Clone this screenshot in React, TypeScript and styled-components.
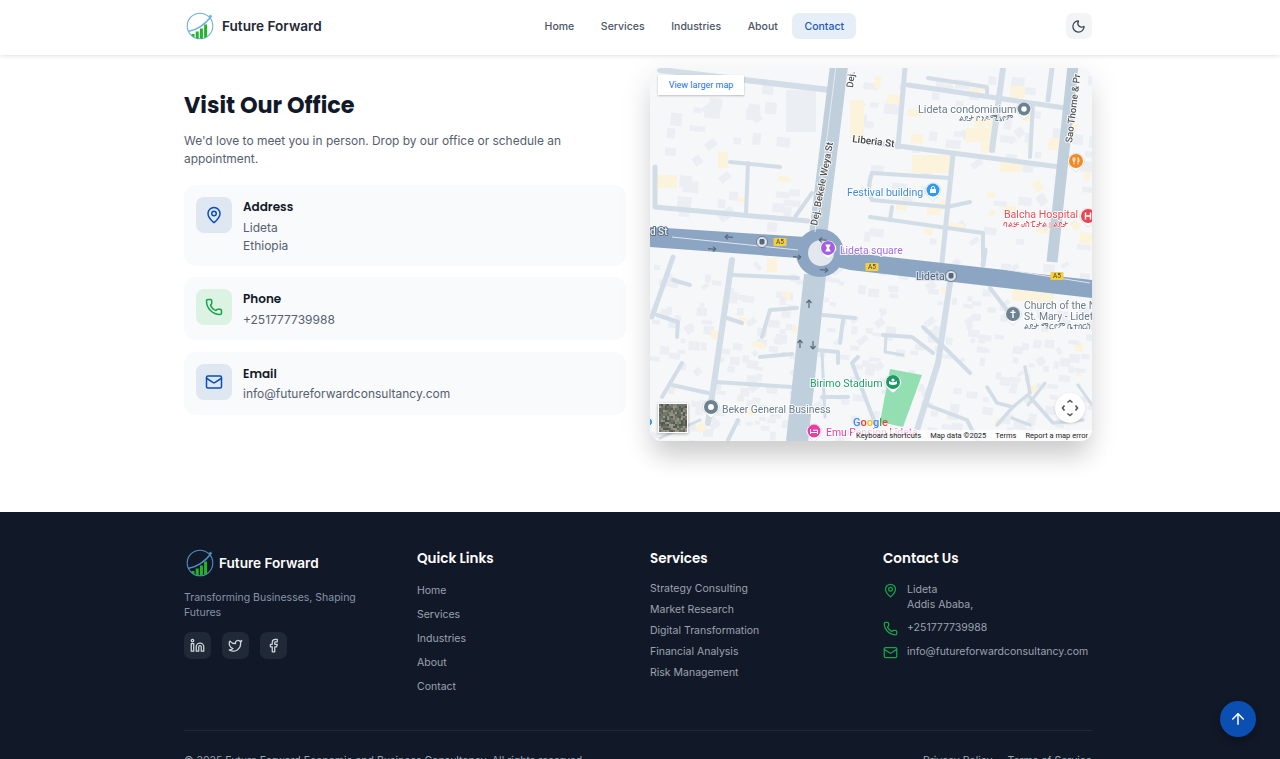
import React from "react";
import styled, { createGlobalStyle } from "styled-components";
import { ArrowUp, Facebook, Linkedin, Mail, MapPin, Moon, Phone, Twitter } from "lucide-react";

const Global = createGlobalStyle`
  html { scrollbar-width: none; }
  html::-webkit-scrollbar { display: none; }
  body { margin: 0; background: #fff; font-family: Inter, "Liberation Sans", sans-serif; color: #111827; }
  * { box-sizing: border-box; }
`;

const HEADING = `Poppins, Inter, "Liberation Sans", sans-serif`;

const Nav = styled.header`
  position: sticky; top: 0; z-index: 20; height: 55px; background: #fff;
  box-shadow: 0 1px 4px rgba(0, 0, 0, .12);
`;
const Container = styled.div`
  width: 908px; margin: 0 188px 0 184px;
`;
const NavInner = styled(Container)`
  height: 52px; display: flex; align-items: center; justify-content: space-between;
`;
const Brand = styled.div<{ $dark?: boolean }>`
  display: flex; align-items: center; gap: ${p => (p.$dark ? 5 : 8)}px; padding-left: 2px;
  color: ${p => (p.$dark ? "#fff" : "#1f2937")};
  font-weight: 600; font-size: 13.6px; line-height: 20px;
`;
const NavLinks = styled.nav`
  display: flex; gap: 2.6px; margin-left: 1px;
`;
const NavLink = styled.a<{ $active?: boolean }>`
  height: 26px; padding: 0 12px; display: flex; align-items: center; border-radius: 7px;
  font-size: 10.5px; font-weight: 500;
  color: ${p => (p.$active ? "#1d5bb5" : "#4b5563")};
  background: ${p => (p.$active ? "#e6eef8" : "transparent")};
`;
const ThemeButton = styled.button`
  width: 26px; height: 26px; border: 0; padding: 0; border-radius: 7px; background: #f3f4f6; color: #374151;
  display: flex; align-items: center; justify-content: center;
`;

const Main = styled.main`
  padding: 13px 0 71px;
`;
const TwoCols = styled(Container)`
  display: grid; grid-template-columns: 442px 442px; gap: 24px;
`;
const Info = styled.section`
  padding-top: 23px;
`;
const Title = styled.h2`
  margin: 0; font: 700 22.4px/28px ${HEADING}; color: #111827;
`;
const Lead = styled.p`
  margin: 13px 0 17px; font-size: 11.95px; line-height: 18px; color: #556070;
`;
const Cards = styled.div`
  display: flex; flex-direction: column; gap: 11.3px;
`;
const Card = styled.div`
  display: flex; gap: 11px; padding: 13px 12px 11.5px; border-radius: 12px; background: #f9fafb;
`;
const IconBox = styled.div<{ $green?: boolean }>`
  width: 36px; height: 36px; margin-top: -1px; flex: none; border-radius: 8px; display: flex; align-items: center; justify-content: center;
  background: ${p => (p.$green ? "#dcf3e4" : "#dfe7f3")};
  color: ${p => (p.$green ? "#16a34a" : "#0b4fb3")};
`;
const CardBody = styled.div`
  display: flex; flex-direction: column;
`;
const CardTitle = styled.div`
  font: 600 12px/18px ${HEADING}; color: #111827; margin-bottom: 2.5px;
`;
const CardLine = styled.div`
  font-size: 12px; line-height: 18px; color: #556070;
`;

const MapFrame = styled.div`
  position: relative; height: 373px; border-radius: 12px; overflow: hidden; background: #f6f7f9;
  box-shadow: 0 20px 25px -5px rgba(0, 0, 0, .14), 0 8px 30px 4px rgba(0, 0, 0, .08);
`;
const MapCanvas = styled.svg`
  display: block; width: 442px; height: 373px; filter: blur(.35px);
`;
const LargerMap = styled.a`
  position: absolute; left: 8px; top: 7px; width: 86px; height: 20px; background: #fff; color: #1a73e8;
  display: flex; align-items: center; justify-content: center;
  font: 400 9px Roboto, sans-serif; box-shadow: 0 1px 2px rgba(60, 64, 67, .3);
`;
const Thumb = styled.svg`
  position: absolute; left: 8px; bottom: 8px; width: 30px; height: 30px; border: 1px solid #fff;
  box-shadow: 0 1px 3px rgba(0, 0, 0, .3);
`;
const Attribution = styled.div`
  position: absolute; right: 0; bottom: 0; height: 11px; padding: 0 4px; display: flex; gap: 9px; align-items: center;
  background: rgba(255, 255, 255, .7); color: #222; font: 400 7.5px/11px Roboto, sans-serif; white-space: nowrap;
`;
const Compass = styled.div`
  position: absolute; right: 7px; bottom: 18px; width: 30px; height: 30px; border-radius: 50%; background: #fff;
  display: flex; align-items: center; justify-content: center; box-shadow: 0 1px 3px rgba(0, 0, 0, .15);
`;
const PlaceLabel = styled.text<{ $c?: string; $s?: number; $w?: number; $h?: string }>`
  font-family: Roboto, "DejaVu Sans", sans-serif;
  font-size: ${p => p.$s ?? 10.5}px; font-weight: ${p => p.$w ?? 400};
  fill: ${p => p.$c ?? "#6a7b8a"};
  stroke: ${p => p.$h ?? "rgba(255,255,255,.85)"}; stroke-width: ${p => ((p.$s ?? 10.5) < 9 ? 1 : 2)}px;
  paint-order: stroke; stroke-linejoin: round;
`;

const Footer = styled.footer`
  background: #111827; padding: 36px 0 20px; color: #9ca3af;
`;
const FooterGrid = styled(Container)`
  display: grid; grid-template-columns: repeat(4, 209px); gap: 24px; min-height: 182px;
`;
const Tagline = styled.p`
  margin: 12px 0 12px; width: 190px; font-size: 10.5px; line-height: 15px; color: #8794a8;
`;
const Socials = styled.div`
  display: flex; gap: 11px;
`;
const Social = styled.a`
  width: 27px; height: 27px; border-radius: 7px; background: #1f2937; color: #d1d5db;
  display: flex; align-items: center; justify-content: center;
`;
const FooterHead = styled.h3`
  margin: 1px 0 9px; font: 600 13.5px/20px ${HEADING}; color: #fff;
`;
const LinkList = styled.div<{ $step: number }>`
  display: grid; grid-auto-rows: ${p => p.$step}px; align-items: center; font-size: 10.5px; color: #9ca3af;
`;
const ContactList = styled.div`
  padding-top: 4px;
`;
const ContactRow = styled.div<{ $mb: number }>`
  display: flex; gap: 9px; align-items: flex-start; margin-bottom: ${p => p.$mb}px;
  font-size: 10.5px; line-height: 15px; color: #9ca3af;
  svg { flex: none; margin-top: 1px; color: #16a34a; }
`;
const Rule = styled(Container)`
  border-top: 1px solid #1f2937; padding-top: 22px; display: flex; justify-content: space-between;
  font-size: 10.5px; line-height: 16px; color: #9ca3af;
`;
const LegalLinks = styled.div`
  display: flex; gap: 15px;
`;
const ScrollTop = styled.button`
  position: fixed; right: 24px; bottom: 22px; width: 36px; height: 36px; border: 0; padding: 0; border-radius: 50%;
  background: #0b4fb3; color: #fff; display: flex; align-items: center; justify-content: center; z-index: 30;
  box-shadow: 0 4px 8px rgba(0, 0, 0, .25);
`;

const Logo = ({ dark }: { dark?: boolean }) => {
  const ring = dark ? "#4d8fc4" : "#6fb0e0";
  const id = dark ? "lc-d" : "lc-l";
  return (
    <svg width="28" height="30" viewBox="0 0 28 30" fill="none">
      <defs>
        <clipPath id={id}><circle cx="14" cy="15" r="12.6" /></clipPath>
      </defs>
      <circle cx="14" cy="15" r="12.8" stroke={ring} strokeWidth="1.1" />
      <path d="M2 20.5C11 19 19.5 13 25.5 5" stroke={ring} strokeWidth="1.5" />
      <path d="M25.8 3.6l-3.6 1.4 2.4 2.2z" fill={ring} />
      <g clipPath={`url(#${id})`} fill="#22b52a">
        <rect x="5.5" y="23" width="3" height="7" />
        <rect x="9.7" y="20.5" width="3" height="10" />
        <rect x="13.9" y="17.5" width="3" height="13" />
        <rect x="18.1" y="13.5" width="3" height="17" />
      </g>
    </svg>
  );
};

/* ---- map drawing data, in page coordinates (viewBox starts at 650,68) ---- */
const thin: [string, number][] = [
  ["M660 70L830 90", 6], ["M655 167V207L808 221", 5], ["M748 163L746 213", 4], ["M730 162L780 167", 4],
  ["M795 217L812 193", 4], ["M905 68L898 147", 5], ["M908 85L990 97L1065 108", 5],
  ["M928 78L987 87V93", 4], ["M1003 68L992 150", 6], ["M1033 103L1030 157", 4], ["M1052 68L1048 100", 5],
  ["M868 142L898 146L1060 167", 5], ["M953 155L942 262", 5], ["M872 173L950 178", 4],
  ["M872 173Q866 190 872 200L947 207L970 202", 4], ["M870 217L983 233V258", 4], ["M892 207L890 220", 4],
  ["M732 260L713 390L708 423", 6], ["M732 275L798 278", 4], ["M673 257L652 317", 5], ["M673 280L690 285", 4],
  ["M657 315L678 322L677 337", 4], ["M797 308L770 310L762 337", 4], ["M727 318L742 323", 4],
  ["M760 357L792 354", 4], ["M682 363L662 397", 4], ["M672 385L708 393", 4], ["M715 382L792 387", 4],
  ["M823 315L855 318", 4], ["M843 320L840 343", 4], ["M818 350L838 352V363", 4], ["M822 353L825 417", 3],
  ["M822 397L848 397", 4], ["M858 357L852 363L875 423", 4], ["M738 420L728 440", 4], ["M700 420L660 438", 3],
  ["M950 283L938 363L917 430", 6], ["M883 335L912 337L933 353", 4], ["M886 336L885 352L903 355", 3],
  ["M923 327L947 350L970 373", 4], ["M990 288L1007 310", 4], ["M987 387L997 403L1013 407L1030 393L1025 367", 3.5],
  ["M1030 397L1053 423L1083 420", 3.5], ["M997 425L1013 407", 3.5], ["M1012 418L1030 425", 3], ["M1045 383L1028 405", 3],
  ["M927 405L967 420L977 440", 4], ["M985 250L983 265", 5], ["M1078 385L1092 405", 3],
  ["M955 268L950 285", 5], ["M868 252L866 262", 4],
];
const wide: [string, number][] = [
  ["M839 66L818 235", 18], ["M815 275L797 442", 22], ["M1073 66L1052 262", 11],
];

let seed = 42;
const rnd = () => { seed = (seed * 16807) % 2147483647; return seed / 2147483647; };
type Block = { x: number; y: number; w: number; h: number; r: number; tan: boolean };
const blocks: Block[] = [];
const scatter = (x0: number, x1: number, y0: number, y1: number, n: number, tanP: number, size: number) => {
  for (let i = 0; i < n; i++) {
    blocks.push({
      x: x0 + rnd() * (x1 - x0), y: y0 + rnd() * (y1 - y0),
      w: size * (.5 + rnd() * .8), h: size * (.4 + rnd() * .6), r: rnd() > .85 ? -35 : 6, tan: rnd() < tanP,
    });
  }
};
scatter(650, 1092, 262, 441, 340, .06, 9);
scatter(650, 800, 75, 225, 40, .03, 13);
scatter(845, 1092, 72, 250, 95, .3, 12);

const big: [number, number, number, number, string][] = [
  [786, 90, 30, 42, "#ebeef2"], [657, 175, 20, 13, "#fbf3dc"], [718, 152, 10, 16, "#fbf3dc"], [1010, 86, 15, 12, "#fbf3dc"],
  [912, 155, 38, 18, "#fbf3dc"], [966, 128, 26, 14, "#fbf3dc"], [1000, 160, 22, 12, "#fbf3dc"], [850, 100, 14, 38, "#fbf3dc"],
  [1012, 285, 42, 16, "#fbf3dc"], [767, 258, 10, 14, "#fbf3dc"],
];

const Pin = ({ x, y, c, r = 6.5, children }: { x: number; y: number; c: string; r?: number; children?: React.ReactNode }) => (
  <g>
    <path d={`M${x - r - 1.5} ${y + 1}A${r + 1.5} ${r + 1.5} 0 1 1 ${x + r + 1.5} ${y + 1}Q${x + r} ${y + 6} ${x} ${y + r + 4}Q${x - r} ${y + 6} ${x - r - 1.5} ${y + 1}Z`}
      fill="#fff" stroke="rgba(60,70,85,.18)" strokeWidth=".8" />
    <circle cx={x} cy={y} r={r} fill={c} />
    <g transform={`translate(${x} ${y})`}>
      {children ?? <circle r={r * .42} fill="#fff" />}
    </g>
  </g>
);
const Shield = ({ x, y }: { x: number; y: number }) => (
  <g>
    <rect x={x - 6.5} y={y - 4} width="13" height="8" rx="1" fill="#f6cf3e" />
    <text x={x} y={y + 2.4} textAnchor="middle" fontSize="6.5" fontFamily="Roboto, sans-serif" fill="#444">A5</text>
  </g>
);
const Arrow = ({ x, y, dir }: { x: number; y: number; dir: number }) => (
  <path d="M-4 0H4M-4 0L-1 -2.5M-4 0L-1 2.5" transform={`translate(${x} ${y}) rotate(${dir})`} stroke="#5b6b7c" strokeWidth="1.2" fill="none" />
);
const Metro = ({ x, y }: { x: number; y: number }) => (
  <g>
    <circle cx={x} cy={y} r="5.5" fill="#dfe5ec" stroke="#6d7c8c" strokeWidth="1" />
    <rect x={x - 2.5} y={y - 3} width="5" height="5.5" rx="1.4" fill="#56677a" />
  </g>
);

const MapDrawing = () => (
  <MapCanvas viewBox="650 68 442 373" aria-label="Map of Lideta">
    <rect x="650" y="68" width="442" height="373" fill="#f6f7f9" />
    {blocks.map((b, i) => (
      <rect key={i} x={b.x} y={b.y} width={b.w} height={b.h} fill={b.tan ? "#fbf3dc" : "#ebeef3"}
        transform={`rotate(${b.r} ${b.x} ${b.y})`} />
    ))}
    {big.map(([x, y, w, h, c], i) => <rect key={i} x={x} y={y} width={w} height={h} fill={c} />)}
    <polygon points="890,369 922,375 903,427 880,422" fill="#93dfb2" />
    <g fill="none" stroke="#d2dde7" strokeLinecap="round" strokeLinejoin="round">
      {thin.map(([d, w], i) => <path key={i} d={d} strokeWidth={w} />)}
    </g>
    <g fill="none" stroke="#c0cfdc">
      {wide.map(([d, w], i) => <path key={i} d={d} strokeWidth={w} />)}
    </g>
    <polygon points="650,227 805,237 845,252 1092,280 1092,298 1005,288 850,270 798,258 650,247" fill="#8ba5c3" />
    <circle cx="820" cy="253" r="24" fill="#8ba5c3" />
    <circle cx="821" cy="253" r="13" fill="#e3e8ee" />
    <path d="M672 237L798 250M1008 270L1090 283" stroke="#dfe6ee" strokeWidth="1" />
    <path d="M815 232L836 66" stroke="#e4e9ef" strokeWidth="1" />
    <Arrow x={729} y={237} dir={4} /><Arrow x={712} y={249} dir={184} />
    <Arrow x={797} y={257} dir={184} /><Arrow x={824} y={270} dir={184} /><Arrow x={823} y={240} dir={4} />
    <Arrow x={809} y={304} dir={90} /><Arrow x={800} y={344} dir={90} /><Arrow x={813} y={345} dir={-90} />
    <Shield x={780} y={242} /><Shield x={872} y={267} /><Shield x={1057} y={276} />
    <Metro x={762} y={242} /><Metro x={951} y={276} />

    <PlaceLabel x="0" y="0" $c="#555" $s={9.6} $w={500} transform="translate(817 226) rotate(-79)">Dej. Bekele Weya St</PlaceLabel>
    <PlaceLabel x="0" y="0" $c="#555" $s={9.6} $w={500} transform="translate(853 88) rotate(-84)">Dej.</PlaceLabel>
    <PlaceLabel x="0" y="0" $c="#555" $s={9.6} $w={500} transform="translate(1072 143) rotate(-83)">Sao Thome &amp; Pr</PlaceLabel>
    <PlaceLabel x="0" y="0" $c="#444" $s={10} $w={500} transform="translate(852 142) rotate(7)">Liberia St</PlaceLabel>
    <PlaceLabel x="918" y="113" $s={10.8}>Lideta condominium</PlaceLabel>
    <PlaceLabel x="959" y="121" $s={8}>ልደታ ኮንዶሚኒየም</PlaceLabel>
    <Pin x={1024} y={109} c="#6c8290" />
    <Pin x={1076} y={161} c="#f08a24" r={7}>
      <path d="M-2 -3.5V3.5M-3 -3.5V-1Q-3 .5 -2 .5T-1 -1V-3.5M2 -3.5V3.5M2 -3.5Q3.4 -2 3 .5H2" stroke="#fff" strokeWidth=".8" fill="none" />
    </Pin>
    <PlaceLabel x="847" y="196" $c="#3f8ae0" $s={10.6}>Festival building</PlaceLabel>
    <Pin x={933} y={190} c="#2f9bf0" r={6.5}>
      <rect x="-3" y="-1" width="6" height="4" rx=".6" fill="#fff" />
      <path d="M-1.6 -1V-2A1.6 1.6 0 0 1 1.6 -2V-1" stroke="#fff" strokeWidth=".9" fill="none" />
    </Pin>
    <PlaceLabel x="1004" y="218" $c="#e8505b" $s={10.6}>Balcha Hospital</PlaceLabel>
    <PlaceLabel x="1003" y="227" $c="#e8505b" $s={8}>ባልቻ ሆስፒታል | ልደታ</PlaceLabel>
    <Pin x={1088} y={216} c="#ea4352" r={7}>
      <path d="M-2.5 -3.5V3.5M2.5 -3.5V3.5M-2.5 0H2.5" stroke="#fff" strokeWidth="1.5" />
    </Pin>
    <PlaceLabel x="650" y="235" $c="#eef2f6" $s={10} $w={500} $h="#5d6f84">d St</PlaceLabel>
    <Pin x={828} y={248} c="#a45fe0" r={7}>
      <path d="M-2.8 -3.5H2.8L1 0L2.8 3.5H-2.8L-1 0Z" fill="#fff" />
    </Pin>
    <PlaceLabel x="840" y="254" $c="#a56be0" $s={10.4}>Lideta square</PlaceLabel>
    <PlaceLabel x="916" y="280" $c="#52637a" $s={10.4} $h="rgba(220,228,238,.9)">Lideta</PlaceLabel>
    <PlaceLabel x="1024" y="309" $s={10.4}>Church of the N</PlaceLabel>
    <PlaceLabel x="1024" y="320" $s={10.4}>St. Mary - Lidet</PlaceLabel>
    <PlaceLabel x="1024" y="329" $s={8}>ልደታ ማርያም ቤተክርስ</PlaceLabel>
    <Pin x={1013} y={314} c="#6c8290" r={7}>
      <path d="M0 -4V4M-2.6 -1.6H2.6" stroke="#fff" strokeWidth="1.4" />
    </Pin>
    <PlaceLabel x="810" y="387" $c="#1e9e6a" $s={10.6}>Birimo Stadium</PlaceLabel>
    <Pin x={893} y={382} c="#1c9a66" r={7}>
      <path d="M-4 -1Q0 1.5 4 -1V2Q0 4 -4 2Z" fill="#fff" />
      <circle cy="-2" r="1.6" fill="#fff" />
    </Pin>
    <PlaceLabel x="722" y="413" $s={10.4}>Beker General Business</PlaceLabel>
    <Pin x={711} y={407} c="#6c8290" r={7} />
    <circle cx="648" cy="422" r="4.5" fill="#2f9bf0" stroke="#fff" />
    <PlaceLabel x="826" y="436" $c="#e83ea4" $s={10.4}>Emu Pension Lideta</PlaceLabel>
    <Pin x={814} y={431} c="#e83ea4" r={6.5}>
      <path d="M-3.5 -2V3M-3.5 1.5H3.5V3M-1 -.8H3.5V1.5" stroke="#fff" strokeWidth="1" fill="none" />
    </Pin>
    <text x="853" y="426" fontFamily="Roboto, sans-serif" fontSize="11" fontWeight="500">
      <tspan fill="#4285f4">G</tspan><tspan fill="#ea4335">o</tspan><tspan fill="#fbbc05">o</tspan>
      <tspan fill="#4285f4">g</tspan><tspan fill="#34a853">l</tspan><tspan fill="#ea4335">e</tspan>
    </text>
  </MapCanvas>
);

const thumbCells = Array.from({ length: 196 }, (_, i) => ({
  x: (i % 14) * 2, y: Math.floor(i / 14) * 2,
  c: ["#6d7166", "#8a8a7d", "#55594f", "#9a9789", "#75786a", "#5f6a5c"][Math.floor(rnd() * 6)],
}));

const App = () => (
  <>
    <Global />
    <Nav>
      <NavInner>
        <Brand><Logo /><span>Future Forward</span></Brand>
        <NavLinks>
          <NavLink>Home</NavLink>
          <NavLink>Services</NavLink>
          <NavLink>Industries</NavLink>
          <NavLink>About</NavLink>
          <NavLink $active>Contact</NavLink>
        </NavLinks>
        <ThemeButton aria-label="Theme"><Moon size={15} /></ThemeButton>
      </NavInner>
    </Nav>
    <Main>
      <TwoCols>
        <Info>
          <Title>Visit Our Office</Title>
          <Lead>We'd love to meet you in person. Drop by our office or schedule an appointment.</Lead>
          <Cards>
            <Card>
              <IconBox><MapPin size={18} /></IconBox>
              <CardBody>
                <CardTitle>Address</CardTitle>
                <CardLine>Lideta</CardLine>
                <CardLine>Ethiopia</CardLine>
              </CardBody>
            </Card>
            <Card>
              <IconBox $green><Phone size={18} /></IconBox>
              <CardBody>
                <CardTitle>Phone</CardTitle>
                <CardLine>+251777739988</CardLine>
              </CardBody>
            </Card>
            <Card>
              <IconBox><Mail size={18} /></IconBox>
              <CardBody>
                <CardTitle>Email</CardTitle>
                <CardLine>info@futureforwardconsultancy.com</CardLine>
              </CardBody>
            </Card>
          </Cards>
        </Info>
        <MapFrame>
          <MapDrawing />
          <LargerMap>View larger map</LargerMap>
          <Thumb viewBox="0 0 28 28">
            {thumbCells.map((c, i) => <rect key={i} x={c.x} y={c.y} width="2.1" height="2.1" fill={c.c} />)}
          </Thumb>
          <Compass>
            <svg width="18" height="18" viewBox="0 0 18 18" fill="none" stroke="#555" strokeWidth="1.6">
              <path d="M6.5 3.5L9 1.5l2.5 2M6.5 14.5L9 16.5l2.5-2M3.5 6.5L1.5 9l2 2.5M14.5 6.5L16.5 9l-2 2.5" />
            </svg>
          </Compass>
          <Attribution>
            <span>Keyboard shortcuts</span><span>Map data ©2025</span><span>Terms</span><span>Report a map error</span>
          </Attribution>
        </MapFrame>
      </TwoCols>
    </Main>
    <Footer>
      <FooterGrid>
        <div>
          <Brand $dark><Logo dark /><span>Future Forward</span></Brand>
          <Tagline>Transforming Businesses, Shaping Futures</Tagline>
          <Socials>
            <Social><Linkedin size={15} /></Social>
            <Social><Twitter size={15} /></Social>
            <Social><Facebook size={15} /></Social>
          </Socials>
        </div>
        <div>
          <FooterHead>Quick Links</FooterHead>
          <LinkList $step={24}>
            <a>Home</a><a>Services</a><a>Industries</a><a>About</a><a>Contact</a>
          </LinkList>
        </div>
        <div>
          <FooterHead>Services</FooterHead>
          <LinkList $step={21}>
            <a>Strategy Consulting</a><a>Market Research</a><a>Digital Transformation</a><a>Financial Analysis</a><a>Risk Management</a>
          </LinkList>
        </div>
        <div>
          <FooterHead>Contact Us</FooterHead>
          <ContactList>
            <ContactRow $mb={8}><MapPin size={15} /><span>Lideta<br />Addis Ababa,</span></ContactRow>
            <ContactRow $mb={8}><Phone size={15} /><span>+251777739988</span></ContactRow>
            <ContactRow $mb={0}><Mail size={15} /><span>info@futureforwardconsultancy.com</span></ContactRow>
          </ContactList>
        </div>
      </FooterGrid>
      <Rule>
        <span>© 2025 Future Forward Economic and Business Consultancy. All rights reserved.</span>
        <LegalLinks><span>Privacy Policy</span><span>Terms of Service</span></LegalLinks>
      </Rule>
    </Footer>
    <ScrollTop aria-label="Back to top"><ArrowUp size={18} /></ScrollTop>
  </>
);

export default App;
